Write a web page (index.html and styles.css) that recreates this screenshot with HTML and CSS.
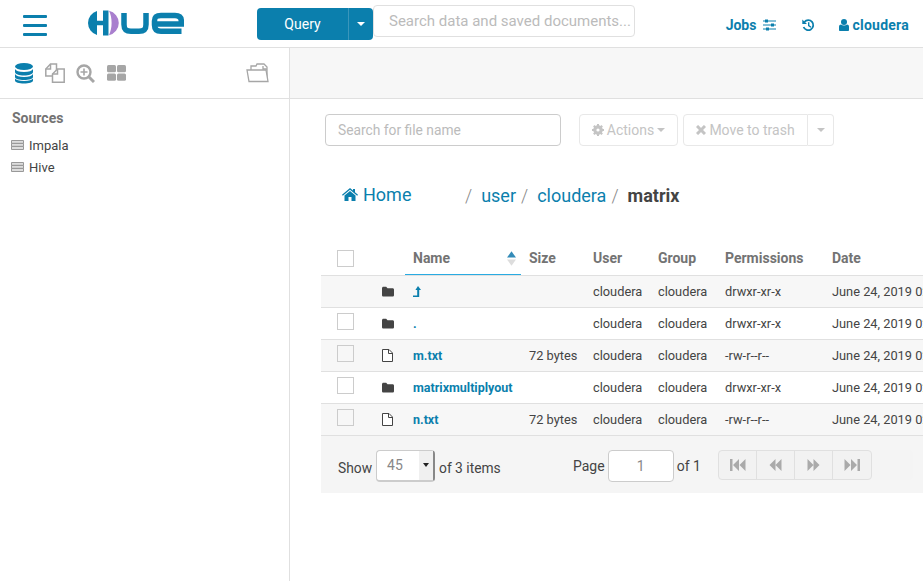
FILE: index.html
```html
<!doctype html>
<html lang="en">
<head>
  <meta charset="utf-8"/>
  <title>Hue - File Browser</title>
  <link rel="stylesheet" href="styles.css">
</head>
<body>

  <header class="topbar">
    <div class="burger"><span></span><span></span><span></span></div>
    <svg class="logo" width="96" height="26" viewBox="0 0 96 26">
      <path fill="#0b7fad" d="M9 1A12.500 12.500 0 0 0 9 25V15.200H15V10.800H9Z"/>
      <path fill="#0b7fad" d="M15 .5H20.500V25.500H15Z" />
      <path fill="#a97fce" d="M21 .8A12.500 12.500 0 0 1 21 25.200C24.500 18 24.500 8 21 .8Z"/>
      <path fill="none" stroke="#0b7fad" stroke-width="5.500" d="M36 3V14.500C36 19.500 38.500 21.300 43 21.300H51C55.500 21.300 58 19.500 58 14.500V3"/>
      <path fill="none" stroke="#0b7fad" stroke-width="5.500" d="M93.500 21.300H73C68.500 21.300 66.500 19 66.500 15V11C66.500 7 68.500 5.500 73 5.500H87C91.500 5.500 93.300 7.500 93.300 11V14H67"/>
    </svg>
    <div class="query-btn"><span class="query-label">Query</span><span class="query-caret"><i class="caret"></i></span></div>
    <div class="global-search">Search data and saved documents...</div>
    <nav class="top-links">
      <a class="top-link jobs">Jobs
        <svg width="13" height="12" viewBox="0 0 13 12"><path stroke="#0b7fad" stroke-width="1" d="M0 2H13M0 6H13M0 10H13"/><path fill="#0b7fad" d="M2 .5H5V3.500H2ZM8 4.500H11V7.500H8ZM3 8.500H6V11.500H3Z"/></svg>
      </a>
      <a class="top-link history">
        <svg width="13" height="13" viewBox="0 0 13 13"><path fill="none" stroke="#0b7fad" stroke-width="1.800" d="M2.400 3A5 5 0 1 1 1.600 8"/><path fill="#0b7fad" d="M.3 .6 5 5H.3ZM6 3.300H7.400V6.300L9.400 7.800 8.600 8.800 6 7Z"/></svg>
      </a>
      <a class="top-link user">
        <svg width="10" height="12" viewBox="0 0 10 12"><circle cx="5" cy="3" r="3" fill="#0b7fad"/><path fill="#0b7fad" d="M0 11V7.800C0 6.500 1 5.600 2 5.600 3.500 6.800 6.500 6.800 8 5.600 9 5.600 10 6.500 10 7.800V11C10 11.600 9.500 12 9 12H1C.5 12 0 11.600 0 11Z"/></svg>
        cloudera
      </a>
    </nav>
  </header>

  <div class="workspace">
    <aside class="sidebar">
      <div class="side-tools">
        <svg class="tool" width="18" height="21" viewBox="0 0 18 21"><g fill="#0b7fad"><ellipse cx="9" cy="3.500" rx="9" ry="3.500"/><path d="M0 6C1 8 4 9 9 9S17 8 18 6V9C18 11 14 12.500 9 12.500S0 11 0 9Z"/><path d="M0 11C1 13 4 14 9 14S17 13 18 11V14C18 16 14 17 9 17S0 16 0 14Z"/><path d="M0 15.500C1 17 4 18 9 18S17 17 18 15.500V17.500C18 19.500 14 20.500 9 20.500S0 19.500 0 17.500Z"/></g></svg>
        <svg class="tool" width="20" height="20" viewBox="0 0 20 20"><g fill="#fff" stroke="#a6a6a6" stroke-width="1.500"><path d="M5.500 1H11.500V13H.8V6Z"/><path d="M12.500 6H19.200V19.200H7.500V11Z"/><path fill="none" d="M5.500 1V6H.8M12.500 6V11H7.500"/></g></svg>
        <svg class="tool tool-zoom" width="19" height="19" viewBox="0 0 19 19"><circle cx="8" cy="8" r="6.500" fill="none" stroke="#a6a6a6" stroke-width="2.400"/><path stroke="#a6a6a6" stroke-width="3" d="M12.500 12.500 18 18"/><path stroke="#a6a6a6" stroke-width="1.600" d="M4.500 8H11.500M8 4.500V11.500"/></svg>
        <svg class="tool" width="19" height="16" viewBox="0 0 19 16"><g fill="#a6a6a6"><rect width="9" height="7.300" rx="1.500"/><rect x="10" width="9" height="7.300" rx="1.500"/><rect y="8.500" width="9" height="7.300" rx="1.500"/><rect x="10" y="8.500" width="9" height="7.300" rx="1.500"/></g></svg>
        <svg class="tool tool-right" width="23" height="20" viewBox="0 0 23 20"><g fill="#fff" stroke="#a6a6a6" stroke-width="1.300"><path d="M5 7V3H10L11 1 18 1 21 4V15"/><path d="M17 3V6H21"/><path d="M1 7H20L22 18.500H3Z"/></g></svg>
      </div>
      <h2 class="side-title">Sources</h2>
      <ul class="source-list">
        <li><svg width="13" height="10" viewBox="0 0 13 10"><g fill="#ddd" stroke="#999"><path d="M.5 .5H12.500V3.300H.5ZM.5 3.500H12.500V6.300H.5ZM.5 6.500H12.500V9.500H.5Z"/></g></svg>Impala</li>
        <li><svg width="13" height="10" viewBox="0 0 13 10"><g fill="#ddd" stroke="#999"><path d="M.5 .5H12.500V3.300H.5ZM.5 3.500H12.500V6.300H.5ZM.5 6.500H12.500V9.500H.5Z"/></g></svg>Hive</li>
      </ul>
    </aside>

    <main class="content">
      <div class="content-bar"></div>

      <div class="file-actions">
        <div class="file-search">Search for file name</div>
        <div class="btn btn-actions">
          <svg width="12" height="12" viewBox="0 0 12 12"><circle cx="6" cy="6" r="3.600" fill="none" stroke="#c4c4c4" stroke-width="2.400"/><path stroke="#c4c4c4" stroke-width="2" d="M6 0V12M0 6H12M1.800 1.800 10.200 10.200M10.200 1.800 1.800 10.200"/><circle cx="6" cy="6" r="1.600" fill="#fff"/></svg>
          Actions<i class="caret caret-grey"></i>
        </div>
        <div class="btn-group">
          <div class="btn btn-trash">
            <svg width="10" height="10" viewBox="0 0 10 10"><path stroke="#c4c4c4" stroke-width="3" d="M1 1 9 9M9 1 1 9"/></svg>
            Move to trash
          </div>
          <div class="btn btn-more"><i class="caret caret-grey"></i></div>
        </div>
      </div>

      <div class="crumbs">
        <a class="crumb-home">
          <svg width="16" height="13" viewBox="0 0 16 13"><path fill="#0b7fad" d="M8 0 11 2.500V1H13V4.200L16 6.800 15.200 7.700 8 1.800 .8 7.700 0 6.800ZM2.500 7.500 8 3 13.500 7.500V13H9.500V9H6.500V13H2.500Z"/></svg>
          Home
        </a>
        <span class="crumb-sep">/</span>
        <a class="crumb">user</a>
        <span class="crumb-sep">/</span>
        <a class="crumb">cloudera</a>
        <span class="crumb-sep">/</span>
        <strong class="crumb-now">matrix</strong>
      </div>

      <div class="table-wrap">
        <table class="files">
          <colgroup>
            <col class="c-check"><col class="c-icon"><col class="c-name"><col class="c-size"><col class="c-user"><col class="c-group"><col class="c-perm"><col class="c-date">
          </colgroup>
          <thead>
            <tr>
              <th><span class="check"></span></th>
              <th></th>
              <th class="sorted">Name
                <svg class="sort" width="9" height="15" viewBox="0 0 10 16"><path fill="#338bb8" d="M5 0 10 7H0Z"/><path fill="#ddd" d="M5 16 10 9H0Z"/></svg>
              </th>
              <th>Size</th>
              <th>User</th>
              <th>Group</th>
              <th>Permissions</th>
              <th>Date</th>
            </tr>
          </thead>
          <tbody>
            <tr class="odd">
              <td></td>
              <td><svg class="ic" width="12" height="11" viewBox="0 0 13 11"><path fill="#444" d="M0 2C0 1 .7 .3 1.500 .3H4.500L6 2H11.500C12.300 2 13 2.700 13 3.500V9.500C13 10.300 12.300 11 11.500 11H1.500C.7 11 0 10.300 0 9.500Z"/></svg></td>
              <td><a class="file-link"><svg class="up" width="8" height="11" viewBox="0 0 8 11"><path fill="#0b7fad" d="M5 0 8 4H6.200V11H0V9.400H4.200V4H2.400Z"/></svg></a></td>
              <td></td>
              <td>cloudera</td><td>cloudera</td><td>drwxr-xr-x</td><td>June 24, 2019 02:08 PM</td>
            </tr>
            <tr>
              <td><span class="check"></span></td>
              <td><svg class="ic" width="12" height="11" viewBox="0 0 13 11"><path fill="#444" d="M0 2C0 1 .7 .3 1.500 .3H4.500L6 2H11.500C12.300 2 13 2.700 13 3.500V9.500C13 10.300 12.300 11 11.500 11H1.500C.7 11 0 10.300 0 9.500Z"/></svg></td>
              <td><a class="file-link">.</a></td>
              <td></td>
              <td>cloudera</td><td>cloudera</td><td>drwxr-xr-x</td><td>June 24, 2019 02:08 PM</td>
            </tr>
            <tr class="odd">
              <td><span class="check"></span></td>
              <td><svg class="ic" width="11" height="13" viewBox="0 0 11 13"><path fill="#fff" stroke="#444" d="M.5 .5H7L10.500 4V12.500H.5Z"/><path fill="none" stroke="#444" d="M6.500 .5V4.500H10.500"/></svg></td>
              <td><a class="file-link">m.txt</a></td>
              <td>72 bytes</td>
              <td>cloudera</td><td>cloudera</td><td>-rw-r--r--</td><td>June 24, 2019 02:08 PM</td>
            </tr>
            <tr>
              <td><span class="check"></span></td>
              <td><svg class="ic" width="12" height="11" viewBox="0 0 13 11"><path fill="#444" d="M0 2C0 1 .7 .3 1.500 .3H4.500L6 2H11.500C12.300 2 13 2.700 13 3.500V9.500C13 10.300 12.300 11 11.500 11H1.500C.7 11 0 10.300 0 9.500Z"/></svg></td>
              <td><a class="file-link">matrixmultiplyout</a></td>
              <td></td>
              <td>cloudera</td><td>cloudera</td><td>drwxr-xr-x</td><td>June 24, 2019 02:08 PM</td>
            </tr>
            <tr class="odd">
              <td><span class="check"></span></td>
              <td><svg class="ic" width="11" height="13" viewBox="0 0 11 13"><path fill="#fff" stroke="#444" d="M.5 .5H7L10.500 4V12.500H.5Z"/><path fill="none" stroke="#444" d="M6.500 .5V4.500H10.500"/></svg></td>
              <td><a class="file-link">n.txt</a></td>
              <td>72 bytes</td>
              <td>cloudera</td><td>cloudera</td><td>-rw-r--r--</td><td>June 24, 2019 02:08 PM</td>
            </tr>
          </tbody>
        </table>

        <div class="pager">
          <div class="pager-show">
            <span>Show</span>
            <div class="select"><span class="select-value">45</span><span class="select-arrow"><i class="caret caret-dark"></i></span></div>
            <span>of 3 items</span>
          </div>
          <div class="pager-page">
            <span>Page</span>
            <div class="page-input">1</div>
            <span>of 1</span>
          </div>
          <div class="pager-btns">
            <div class="pg-btn"><svg width="16" height="12" viewBox="0 0 16 12"><path fill="#aaa" d="M0 0H2.500V12H0ZM9 0V12L3 6ZM15.500 0V12L9.500 6Z"/></svg></div>
            <div class="pg-btn"><svg width="13" height="12" viewBox="0 0 13 12"><path fill="#aaa" d="M6.500 0V12L.5 6ZM12.500 0V12L6.500 6Z"/></svg></div>
            <div class="pg-btn"><svg width="13" height="12" viewBox="0 0 13 12"><path fill="#aaa" d="M.5 0V12L6.500 6ZM6.500 0V12L12.500 6Z"/></svg></div>
            <div class="pg-btn"><svg width="16" height="12" viewBox="0 0 16 12"><path fill="#aaa" d="M16 0H13.500V12H16ZM7 0V12L13 6ZM.5 0V12L6.500 6Z"/></svg></div>
          </div>
          <div class="pager-rest"></div>
        </div>
      </div>
    </main>
  </div>

</body>
</html>
```

FILE: styles.css
```css
:root {
  --blue: #0b7fad;
  --line: #e0e0e0;
  --muted: #c4c4c4;
  --text: #444;
}
* { margin: 0; padding: 0; box-sizing: border-box; }
html, body { height: 100%; overflow: hidden; }
body { font-family: "Roboto", "Liberation Sans", sans-serif; font-size: 13px; color: var(--text); background-color: #fff; display: flex; flex-direction: column; }
ul { list-style: none; }

/* top bar */
.topbar { height: 48px; flex: none; display: flex; align-items: flex-start; border-bottom: 1px solid var(--line); }
.burger { width: 24px; margin: 15px 0 0 23px; display: flex; flex-direction: column; gap: 6px; }
.burger span { display: block; height: 3px; background-color: var(--blue); border-radius: 1px; }
.logo { margin: 10px 0 0 41px; }
.query-btn { width: 116px; height: 32px; margin: 8px 0 0 73px; display: flex; color: #fff; font-size: 14px; background-color: var(--blue); border-radius: 4px; }
.query-label { width: 91px; text-align: center; line-height: 32px; }
.query-caret { flex: 1; display: flex; align-items: center; justify-content: center; border-left: 1px solid #3a96bb; }
.caret { display: inline-block; width: 0; height: 0; border-left: 4px solid transparent; border-right: 4px solid transparent; border-top: 4px solid #fff; }
.caret-grey { border-top-color: var(--muted); }
.caret-dark { border-left-width: 3px; border-right-width: 3px; border-top-color: #222; }
.global-search { width: 262px; height: 32px; margin-top: 5px; padding-left: 15px; line-height: 30px; font-size: 15px; color: #bbb; border: 1px solid var(--line); border-radius: 4px; white-space: nowrap; }
.top-links { margin: 17px 14px 0 auto; display: flex; align-items: center; font-size: 14px; font-weight: 700; color: var(--blue); }
.top-link { display: flex; align-items: center; gap: 3px; }
.jobs { gap: 7px; }
.history { margin-left: 26px; }
.user { margin-left: 24px; letter-spacing: 0.25px; }

/* page below the bar */
.workspace { flex: 1; display: flex; min-height: 0; }
.sidebar { width: 290px; flex: none; border-right: 1px solid var(--line); }
.side-tools { height: 51px; display: flex; align-items: center; padding: 0 20px 0 15px; gap: 12px; border-bottom: 1px solid var(--line); }
.tool-zoom { margin-left: -1px; }
.tool-right { margin-left: auto; }
.side-title { margin: 11px 0 0 12px; font-size: 14px; line-height: 17px; font-weight: 700; color: #737373; }
.source-list { margin: 7px 0 0 11px; }
.source-list li { height: 22px; display: flex; align-items: center; gap: 5px; }

.content { flex: 1; min-width: 0; overflow: hidden; }
.content-bar { height: 51px; background-color: #f7f7f7; border-bottom: 1px solid var(--line); }
.file-actions { margin: 15px 0 0 35px; display: flex; align-items: flex-start; }
.file-search { width: 236px; height: 32px; padding-left: 12px; line-height: 30px; font-size: 13.8px; color: #bbb; border: 1px solid #ccc; border-radius: 4px; }
.btn { height: 32px; display: flex; align-items: center; justify-content: center; gap: 3px; font-size: 14px; color: var(--muted); background-color: #fff; border: 1px solid #e8e8e8; border-radius: 4px; }
.btn-actions { width: 99px; margin-left: 18px; }
.btn-group { margin-left: 5px; display: flex; }
.btn-trash { width: 125px; border-radius: 4px 0 0 4px; }
.btn-more { width: 26px; border-left: 0; border-radius: 0 4px 4px 0; }

.crumbs { margin: 36px 0 0 52px; height: 26px; display: flex; align-items: center; font-size: 18px; color: var(--blue); }
.crumb-home { width: 123px; display: flex; align-items: center; gap: 5px; margin-top: -2px; }
.crumb-sep { color: #888; margin-right: 9px; font-weight: 300; }
.crumb { margin-right: 5px; }
.crumb-now { color: var(--text); font-weight: 700; }

/* file table */
.table-wrap { margin: 34px 0 0 31px; width: 800px; }
.files { width: 800px; table-layout: fixed; border-collapse: collapse; }
.c-check { width: 48px; }
.c-icon { width: 36px; }
.c-name { width: 116px; }
.c-size { width: 64px; }
.c-user { width: 65px; }
.c-group { width: 67px; }
.c-perm { width: 107px; }
.files th { height: 33px; padding: 0 8px; text-align: left; font-size: 14px; font-weight: 700; color: #737373; border-bottom: 1px solid var(--line); white-space: nowrap; }
.files th:first-child, .files td:first-child { padding: 0 0 0 16px; }
.files th:nth-child(2), .files td:nth-child(2) { padding: 0 0 0 13px; }
.files th.sorted { position: relative; box-shadow: inset 0 -1px 0 #29abe2; }
.sort { position: absolute; right: 5px; top: 9px; }
.files td { height: 32px; padding: 0 8px; font-size: 12.8px; border-bottom: 1px solid var(--line); white-space: nowrap; overflow: hidden; }
.odd td { background-color: #f7f7f7; }
.check { display: block; width: 17px; height: 17px; margin-bottom: 4px; border: 1px solid #ccc; }
.files th .check { margin-bottom: 0; margin-top: 1px; }
.ic { display: block; }
.file-link { color: var(--blue); font-weight: 700; font-size: 12.5px; }
.up { display: block; }

.pager { height: 57px; display: flex; align-items: flex-start; background-color: #f5f5f5; }
.pager-show { width: 252px; margin-top: 14px; padding-left: 17px; display: flex; align-items: center; gap: 4px; font-size: 13.8px; }
.pager-show > span { margin-top: 5px; }
.select { width: 59px; height: 32px; display: flex; background-color: #fff; border: 1px solid #ccc; border-right: 2px solid #888; border-bottom-width: 2px; border-radius: 4px; }
.select-value { flex: 1; padding-left: 10px; line-height: 29px; font-size: 14px; color: #888; }
.select-arrow { width: 14px; display: flex; align-items: center; justify-content: center; background-color: #f0f0f0; }
.pager-page { width: 145px; margin-top: 14px; display: flex; align-items: center; gap: 3px; font-size: 14px; }
.page-input { width: 66px; height: 32px; text-align: center; line-height: 30px; color: #888; background-color: #fff; border: 1px solid #ccc; border-radius: 4px; }
.pager-btns { margin-top: 14px; display: flex; height: 30px; background-color: #f2f2f2; border: 1px solid var(--line); border-radius: 4px; }
.pg-btn { width: 38px; display: flex; align-items: center; justify-content: center; border-right: 1px solid var(--line); }
.pg-btn:last-child { border-right: 0; }
.pager-rest { width: 41px; height: 30px; margin-top: 14px; background-color: #f4f4f4; border-radius: 0 4px 4px 0; }
```
